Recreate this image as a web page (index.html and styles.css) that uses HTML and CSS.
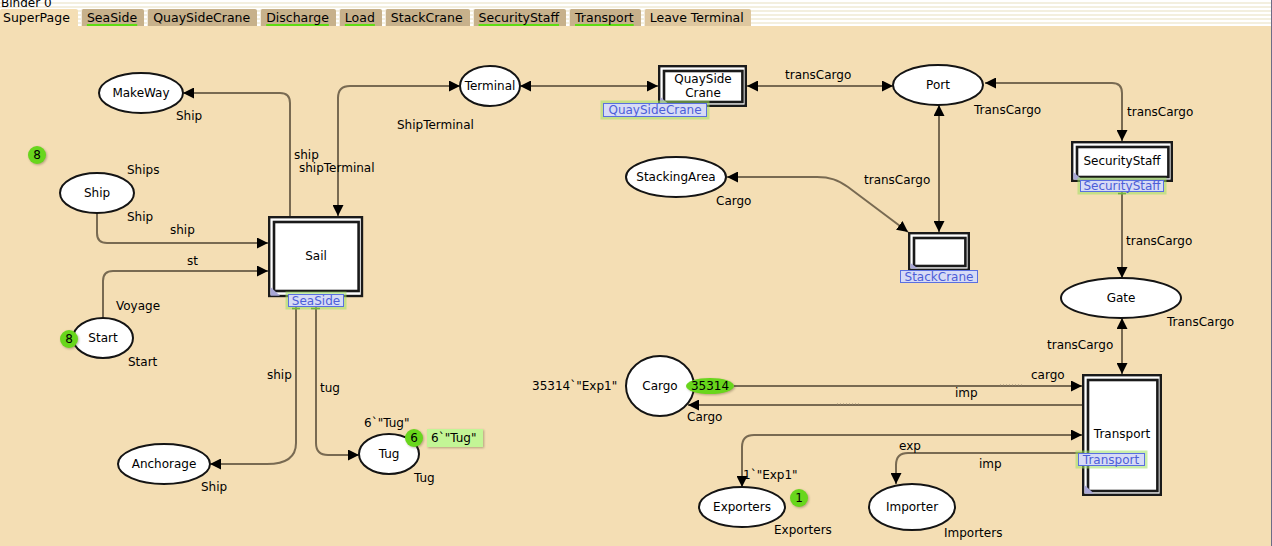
FILE: index.html
```html
<!DOCTYPE html>
<html>
<head>
<meta charset="utf-8">
<link rel="stylesheet" href="styles.css">
</head>
<body>
<div class="app">
  <header class="binder">
    <div class="title"><span>Binder 0</span></div>
    <nav class="tabs">
      <div class="tab active">SuperPage</div>
      <div class="tab"><span class="ok">SeaSide</span></div>
      <div class="tab">QuaySideCrane</div>
      <div class="tab"><span class="ok">Discharge</span></div>
      <div class="tab"><span class="ok">Load</span></div>
      <div class="tab">StackCrane</div>
      <div class="tab"><span class="ok">SecurityStaff</span></div>
      <div class="tab"><span class="ok">Transport</span></div>
      <div class="tab light">Leave Terminal</div>
    </nav>
  </header>
  <main class="canvas">
    <svg class="net" width="1271" height="520" viewBox="0 26 1271 520" xmlns="http://www.w3.org/2000/svg">
      <defs>
        <marker id="ah" viewBox="0 0 10 10" refX="10" refY="5" markerWidth="11" markerHeight="11" markerUnits="userSpaceOnUse" orient="auto-start-reverse">
          <path class="head" d="M0,0 L10,5 L0,10 z"/>
        </marker>
      </defs>

      <!-- arcs -->
      <g class="arcs">
        <path class="arc end" d="M290,216 V103 Q290,93 280,93 H183"/>
        <path class="arc both" d="M460,86 H350 Q338,86 338,98 V216"/>
        <path class="arc both" d="M520,86 H658"/>
        <path class="arc both" d="M747,86 H893"/>
        <path class="arc both" d="M985,83 H1112 Q1122,83 1122,93 V141"/>
        <path class="arc both" d="M939,105 V232"/>
        <path class="arc both" d="M727,177 H817 C830,177 838,180 848,187 L908,232"/>
        <path class="arc end" d="M1122,192 V278"/>
        <path class="arc both" d="M1122,318 V374"/>
        <path class="arc end" d="M734,386 H1082"/>
        <path class="arc end" d="M1082,405 H688"/>
        <path class="arc both" d="M1082,435 H754 Q742,435 742,447 V487"/>
        <path class="arc end" d="M1082,453 H908 Q896,453 896,465 V484"/>
        <path class="arc end" d="M97,213 V233 Q97,243 107,243 H268"/>
        <path class="arc end" d="M103,318 V281 Q103,271 113,271 H268"/>
        <path class="arc end" d="M296,297 V443 C296,458 285,464 267,464 H210"/>
        <path class="arc end" d="M316,297 V443 Q316,455 328,455 H359"/>
        <path class="dots" d="M1000,385 H1024 M837,404 H861"/>
      </g>

      <!-- places -->
      <g class="places">
        <ellipse class="place" cx="141" cy="93" rx="42" ry="20"/>
        <text class="name" x="141" y="97">MakeWay</text>
        <ellipse class="place" cx="97" cy="193" rx="37" ry="20"/>
        <text class="name" x="97" y="197">Ship</text>
        <ellipse class="place" cx="103" cy="338" rx="30" ry="20"/>
        <text class="name" x="103" y="342">Start</text>
        <ellipse class="place" cx="164" cy="464" rx="46" ry="20"/>
        <text class="name" x="164" y="468">Anchorage</text>
        <ellipse class="place" cx="389" cy="454" rx="30" ry="20"/>
        <text class="name" x="389" y="458">Tug</text>
        <ellipse class="place" cx="490" cy="86" rx="30" ry="20"/>
        <text class="name" x="490" y="90">Terminal</text>
        <ellipse class="place" cx="938" cy="85" rx="45" ry="20"/>
        <text class="name" x="938" y="89">Port</text>
        <ellipse class="place" cx="676" cy="177" rx="50" ry="20"/>
        <text class="name" x="676" y="181">StackingArea</text>
        <ellipse class="place" cx="1121" cy="298" rx="60" ry="20"/>
        <text class="name" x="1121" y="302">Gate</text>
        <ellipse class="place" cx="660" cy="386" rx="34" ry="30"/>
        <text class="name" x="660" y="390">Cargo</text>
        <ellipse class="place" cx="742" cy="507" rx="43" ry="20"/>
        <text class="name" x="742" y="511">Exporters</text>
        <ellipse class="place" cx="912" cy="507" rx="43" ry="23"/>
        <text class="name" x="912" y="511">Importer</text>
      </g>

      <!-- transitions -->
      <g class="transitions">
        <rect class="t-out" x="269.2" y="217.2" width="92.8" height="78.8"/>
        <rect class="t-in" x="274" y="222" width="84.6" height="69"/>
        <path class="corner" d="M270.5,287 V295.8 H280 z"/>
        <text class="name" x="316" y="260">Sail</text>

        <rect class="t-out" x="659.2" y="66.2" width="86.6" height="39.6"/>
        <rect class="t-in" x="664" y="71" width="78.4" height="31"/>
        <path class="corner" d="M660.5,97 V104.6 H669 z"/>
        <text class="name" x="703" y="83">QuaySide</text>
        <text class="name" x="703" y="97">Crane</text>

        <rect class="t-out" x="909.2" y="233.2" width="59.6" height="36.6"/>
        <rect class="t-in" x="914" y="238" width="51.4" height="28"/>
        <path class="corner" d="M910.5,263 V268.6 H918 z"/>

        <rect class="t-out" x="1072.2" y="142.2" width="99.6" height="38.6"/>
        <rect class="t-in" x="1077" y="147" width="91.4" height="30"/>
        <path class="corner" d="M1073.5,172 V179.6 H1082 z"/>
        <text class="name" x="1122" y="165">SecurityStaff</text>

        <rect class="t-out" x="1083.2" y="375.2" width="77.6" height="119.6"/>
        <rect class="t-in" x="1088" y="380" width="69.4" height="111"/>
        <path class="corner" d="M1084.5,485 V493.6 H1094 z"/>
        <text class="name" x="1122" y="438">Transport</text>
      </g>

      <!-- substitution tags -->
      <g class="tags">
        <path class="tick" d="M292,308.5 H300 M311,308.5 H320"/>
        <rect class="glow" x="288" y="294" width="56" height="13"/>
        <rect class="tag" x="288.5" y="294.5" width="55" height="12"/>
        <text class="tagtext" x="316" y="305">SeaSide</text>

        <rect class="glow" x="603" y="103" width="104" height="14"/>
        <rect class="tag" x="603.5" y="103.5" width="103" height="13"/>
        <text class="tagtext" x="655" y="114">QuaySideCrane</text>

        <rect class="tag" x="900.5" y="270.5" width="77" height="12"/>
        <text class="tagtext" x="939" y="281">StackCrane</text>

        <path class="tick" d="M1118,193.5 H1126"/>
        <rect class="glow" x="1080" y="180" width="84" height="12"/>
        <rect class="tag" x="1080.5" y="180.5" width="83" height="11"/>
        <text class="tagtext" x="1122" y="190">SecurityStaff</text>

        <rect class="glow" x="1078" y="453" width="67" height="13"/>
        <rect class="tag" x="1078.5" y="453.5" width="66" height="12"/>
        <text class="tagtext" x="1111" y="464">Transport</text>
      </g>

      <!-- inscriptions -->
      <g class="labels">
        <text x="176" y="120">Ship</text>
        <text x="127" y="174">Ships</text>
        <text x="127" y="221">Ship</text>
        <text x="170" y="234">ship</text>
        <text x="187" y="265">st</text>
        <text x="294" y="159">ship</text>
        <text x="299" y="172">shipTerminal</text>
        <text x="397" y="129">ShipTerminal</text>
        <text x="116" y="310">Voyage</text>
        <text x="128" y="366">Start</text>
        <text x="267" y="379">ship</text>
        <text x="320" y="392">tug</text>
        <text x="364" y="427">6`"Tug"</text>
        <text x="414" y="482">Tug</text>
        <text x="201" y="491">Ship</text>
        <text x="785" y="79">transCargo</text>
        <text x="974" y="114">TransCargo</text>
        <text x="1127" y="116">transCargo</text>
        <text x="864" y="184">transCargo</text>
        <text x="716" y="205">Cargo</text>
        <text x="1126" y="245">transCargo</text>
        <text x="1167" y="326">TransCargo</text>
        <text x="1047" y="349">transCargo</text>
        <text x="532" y="390">35314`"Exp1"</text>
        <text x="687" y="421">Cargo</text>
        <text x="743" y="479">1`"Exp1"</text>
        <text x="774" y="534">Exporters</text>
        <text x="1031" y="379">cargo</text>
        <text x="955" y="397">imp</text>
        <text x="899" y="450">exp</text>
        <text x="979" y="468">imp</text>
        <text x="944" y="537">Importers</text>
      </g>

      <!-- tokens -->
      <g class="tokens">
        <circle class="token" cx="37" cy="155" r="9"/>
        <text class="count" x="37" y="159">8</text>
        <circle class="token" cx="69" cy="339" r="9"/>
        <text class="count" x="69" y="343">8</text>
        <circle class="token" cx="414" cy="438" r="9"/>
        <text class="count" x="414" y="442">6</text>
        <circle class="token" cx="799" cy="498" r="9"/>
        <text class="count" x="799" y="502">1</text>
        <ellipse class="token" cx="710" cy="386" rx="24" ry="8"/>
        <text class="count" x="710" y="390">35314</text>
        <rect class="marking" x="427" y="429" width="56" height="18"/>
        <text class="marktext" x="431" y="442">6`"Tug"</text>
      </g>
    </svg>
  </main>
</div>
</body>
</html>
```

FILE: styles.css
```css
html, body {
  margin: 0;
  padding: 0;
  background: #f4deb4;
}

.app {
  width: 1271px;
  height: 546px;
  border-right: 1px solid #6c6c86;
  display: flex;
  flex-direction: column;
  overflow: hidden;
  font-family: "DejaVu Sans", Verdana, sans-serif;
}

.binder {
  height: 26px;
  flex: none;
  display: flex;
  flex-direction: column;
  background: repeating-linear-gradient(to bottom, #ffffff 0 2px, #f3efdf 2px 4px);
}

.title {
  height: 9px;
  overflow: hidden;
  flex: none;
}

.title span {
  display: block;
  margin-top: -4px;
  padding-left: 1px;
  font-size: 12px;
  line-height: 14px;
  color: #000;
}

.tabs {
  display: flex;
  gap: 3px;
  height: 17px;
  align-items: stretch;
}

.tab {
  font-size: 12.5px;
  line-height: 17px;
  padding: 0 7px 0 5px;
  background: #c7b18b;
  border-left: 1px solid #f1eadb;
  border-radius: 2px 2px 0 0;
  color: #000;
  white-space: nowrap;
}

.tab.active {
  background: #f4deb4;
  border-left: none;
  padding: 0 8px 0 3px;
}

.tab.light {
  background: #dec79f;
}

.tab .ok {
  text-decoration: underline;
  text-decoration-color: #5fdc12;
  text-decoration-thickness: 2px;
  text-underline-offset: 2px;
  text-decoration-skip-ink: none;
}

.canvas {
  flex: 1;
  background: #f4deb4;
}

.net {
  display: block;
}

.net text {
  font-family: "DejaVu Sans", Verdana, sans-serif;
  font-size: 12px;
  fill: #000;
}

.arc {
  fill: none;
  stroke: #786a52;
  stroke-width: 2;
}

.arc.end {
  marker-end: url(#ah);
}

.arc.both {
  marker-start: url(#ah);
  marker-end: url(#ah);
}

.head {
  fill: #000;
}

.dots {
  stroke: #9a8a70;
  stroke-width: 1;
  stroke-dasharray: 1 2;
  fill: none;
}

.place {
  fill: #fff;
  stroke: #141414;
  stroke-width: 2;
}

.net .name {
  text-anchor: middle;
}

.t-out {
  fill: #fff;
  stroke: #1a1a1a;
  stroke-width: 2.4;
}

.t-in {
  fill: none;
  stroke: #1a1a1a;
  stroke-width: 2.6;
}

.corner {
  fill: #a9a7d6;
}

.glow {
  fill: none;
  stroke: #9fe062;
  stroke-width: 5;
  stroke-opacity: 0.55;
}

.tag {
  fill: #d7dbf6;
  stroke: #5a6fe0;
  stroke-width: 1;
}

.net .tagtext {
  fill: #4d5ed8;
  text-anchor: middle;
}

.tick {
  stroke: #3b7a18;
  stroke-width: 1.5;
  fill: none;
}

.token {
  fill: #68d61c;
  filter: drop-shadow(1px 1px 1px rgba(60, 50, 20, 0.35));
}

.net .count {
  text-anchor: middle;
}

.marking {
  fill: #c3f596;
  filter: drop-shadow(1px 1px 1px rgba(60, 50, 20, 0.35));
}
```
